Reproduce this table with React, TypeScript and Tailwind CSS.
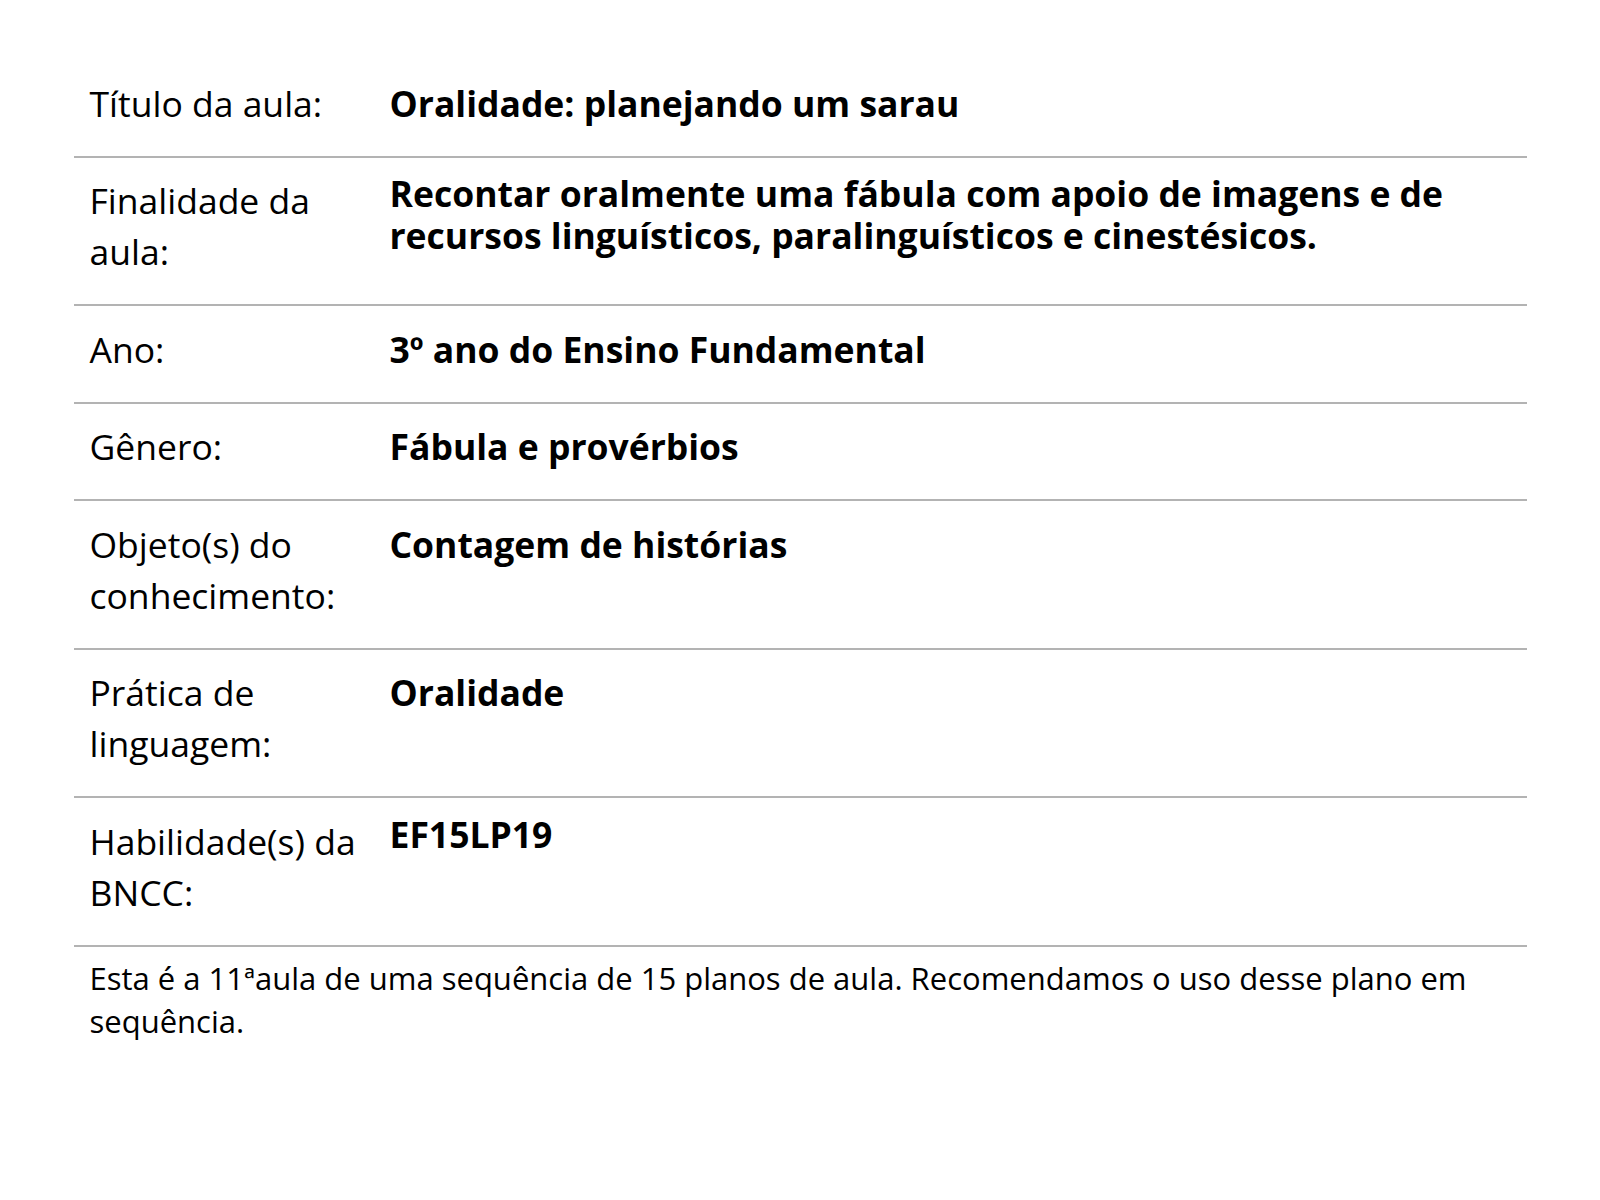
const rows = [
  { label: "Título da aula:", value: "Oralidade: planejando um sarau", tight: false },
  {
    label: "Finalidade da aula:",
    value:
      "Recontar oralmente uma fábula com apoio de imagens e de recursos linguísticos, paralinguísticos e cinestésicos.",
    tight: true,
  },
  { label: "Ano:", value: "3º ano do Ensino Fundamental", tight: false },
  { label: "Gênero:", value: "Fábula e provérbios", tight: false },
  { label: "Objeto(s) do conhecimento:", value: "Contagem de histórias", tight: false },
  { label: "Prática de linguagem:", value: "Oralidade", tight: false },
  { label: "Habilidade(s) da BNCC:", value: "EF15LP19", tight: true },
];

export default function App() {
  return (
    <div className="min-h-screen bg-white font-['Open_Sans',sans-serif] text-black">
      <div className="mx-auto w-[1453px] pt-[60px]">
        <div className="flex flex-col">
          {rows.map((row) => (
            <div
              key={row.label}
              className="grid grid-cols-[300px_1fr] border-b-2 border-[#b3b3b3]"
            >
              <div className="px-4 pt-[17.5px] pb-[27px] text-[35.5px] leading-[51px]">
                {row.label}
              </div>
              <div
                className={
                  row.tight
                    ? "px-4 pt-[14.5px] pb-[27px] text-[35.5px] font-bold leading-[42px]"
                    : "px-4 pt-[17.5px] pb-[27px] text-[35.5px] font-bold leading-[51px]"
                }
              >
                {row.value}
              </div>
            </div>
          ))}
        </div>
        <p className="px-4 pt-[10px] text-[31px] leading-[43px]">
          Esta é a 11ªaula de uma sequência de 15 planos de aula. Recomendamos o
          uso desse plano em sequência.
        </p>
      </div>
    </div>
  );
}
